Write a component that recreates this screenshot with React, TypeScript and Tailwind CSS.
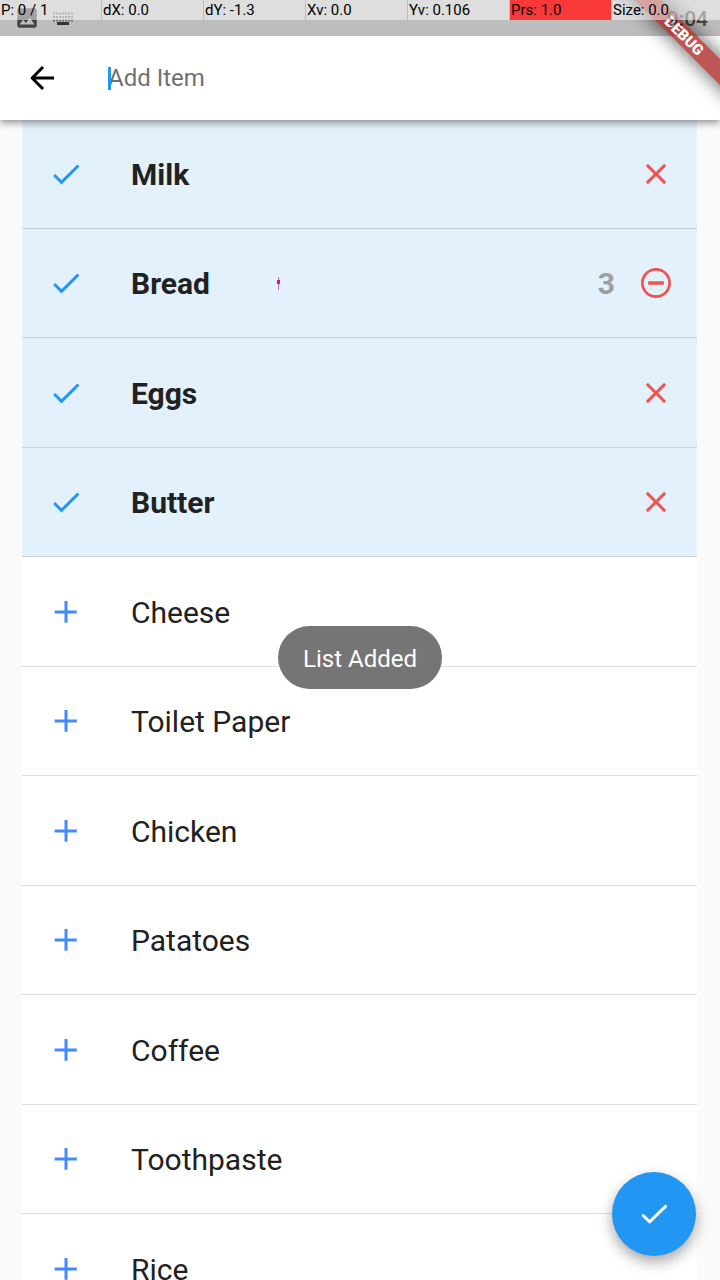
import React from 'react';

type Item = { name: string; added?: boolean; count?: number };

const items: Item[] = [
  { name: 'Milk', added: true },
  { name: 'Bread', added: true, count: 3 },
  { name: 'Eggs', added: true },
  { name: 'Butter', added: true },
  { name: 'Cheese' },
  { name: 'Toilet Paper' },
  { name: 'Chicken' },
  { name: 'Patatoes' },
  { name: 'Coffee' },
  { name: 'Toothpaste' },
  { name: 'Rice' },
];

const pointerStats = ['P: 0 / 1', 'dX: 0.0', 'dY: -1.3', 'Xv: 0.0', 'Yv: 0.106', 'Prs: 1.0', 'Size: 0.0'];

function Icon({ d, className = '' }: { d: string; className?: string }) {
  return (
    <svg viewBox="0 0 24 24" className={`size-9 shrink-0 ${className}`} fill="currentColor" aria-hidden="true">
      <path d={d} />
    </svg>
  );
}

const CHECK = 'M9 16.17 4.83 12l-1.42 1.41L9 19 21 7l-1.41-1.41z';
const ADD = 'M19.2 13H13v6.2h-2V13H4.4v-2H11V4.6h2V11h6.2z';
const CLOSE =
  'M18.800 6.600 17.400 5.200 12 10.600 6.600 5.200 5.200 6.600 10.600 12 5.200 17.400 6.600 18.800 12 13.400 17.400 18.800 18.800 17.400 13.400 12z';
const REMOVE =
  'M6.800 10.800v2.400h10.400v-2.400zM12 2C6.480 2 2 6.480 2 12s4.480 10 10 10 10-4.480 10-10S17.520 2 12 2zm0 18.200c-4.500 0-8.200-3.700-8.200-8.200S7.500 3.800 12 3.800s8.200 3.700 8.200 8.200-3.700 8.200-8.200 8.200z';

function DebugBanner() {
  return (
    <div className="pointer-events-none absolute top-0 right-0 size-[120px] overflow-hidden">
      <div className="absolute top-[27px] -right-[46px] h-[18px] w-[164px] rotate-45 bg-[#a81c1c]/75 text-center text-[15px] leading-[18px] font-black text-white shadow-[0_0_20px_rgba(0,0,0,0.7)]">
        DEBUG
      </div>
    </div>
  );
}

function StatusBar() {
  return (
    <div className="relative z-20 h-9 shrink-0 bg-[#bdbdbd]">
      <DebugBanner />
      <div className="relative flex h-full items-center pl-[14px] pr-3 text-[#424242]">
        <svg viewBox="0 0 24 24" className="size-[26px]" fill="currentColor" aria-hidden="true">
          <path d="M21 19V5c0-1.1-.9-2-2-2H5c-1.1 0-2 .9-2 2v14c0 1.1.9 2 2 2h14c1.1 0 2-.9 2-2zM8.500 13.500l2.500 3.010L14.500 12l4.500 6H5l3.500-4.500z" />
        </svg>
        <svg viewBox="0 0 22 13" className="ml-3 h-[13px] w-[22px]" aria-hidden="true">
          <path d="M1 1.500H21M1 5H21M1 8.500H21" stroke="#6c6c6c" strokeWidth="2" strokeDasharray="2 1" />
          <path d="M5 11.500H17" stroke="#333" strokeWidth="3" />
        </svg>
        <span className="ml-auto pt-0.5 text-[21px] leading-9 font-medium text-black/65">9:04</span>
      </div>
      <div className="absolute inset-x-0 top-0 grid h-5 grid-cols-[repeat(6,102px)_1fr] text-[15px] leading-5 text-black">
        {pointerStats.map((stat) => (
          <span
            key={stat}
            className={`border-r pl-px whitespace-nowrap ${
              stat.startsWith('Prs')
                ? 'border-[#bdbdbd] bg-[#f93838]'
                : stat.startsWith('Size')
                  ? 'border-transparent bg-white/50'
                  : 'border-[#bdbdbd] bg-white/50'
            }`}
          >
            {stat}
          </span>
        ))}
      </div>
    </div>
  );
}

function ItemRow({ item }: { item: Item }) {
  return (
    <li
      className={`relative flex items-center border-b pr-[23px] pl-[26px] odd:h-[110px] even:h-[109px] ${
        item.added ? 'border-[#c4d2dc] bg-[#e3f1fc]' : 'border-[#dedede] bg-white'
      }`}
    >
      <button
        type="button"
        aria-label={item.added ? `${item.name} added` : `Add ${item.name}`}
        className={item.added ? 'text-[#2196f3]' : 'text-[#448aff]'}
      >
        <Icon d={item.added ? CHECK : ADD} />
      </button>
      <span className={`ml-[47px] pt-0.5 text-[30px] leading-9 text-[#212121] ${item.added ? 'font-bold' : ''}`}>
        {item.name}
      </span>
      {item.count && (
        <>
          <svg viewBox="0 0 3 13" className="absolute top-[48px] left-[255px] h-[13px] w-[3px]" aria-hidden="true">
            <path d="M1.500 0V13" stroke="#b86cc0" />
            <path d="M0 5H3" stroke="#f01450" strokeWidth="4" />
          </svg>
          <span className="mr-[23px] ml-auto pt-0.5 text-[30px] leading-9 font-bold text-[#9e9e9e]">
            {item.count}
          </span>
        </>
      )}
      {item.added && (
        <button
          type="button"
          aria-label={`Remove ${item.name}`}
          className={`text-[#ef5350] ${item.count ? '' : 'ml-auto'}`}
        >
          <Icon d={item.count ? REMOVE : CLOSE} />
        </button>
      )}
    </li>
  );
}

export default function App() {
  return (
    <div className="relative flex h-screen flex-col overflow-hidden bg-[#fafafa] font-[Roboto,sans-serif]">
      <StatusBar />
      <header className="relative z-10 flex h-[84px] shrink-0 items-center bg-white pl-6 shadow-[0_3px_7px_rgba(0,0,0,0.4)]">
        <button type="button" aria-label="Back" className="text-black">
          <svg viewBox="0 0 24 24" className="size-9" fill="none" stroke="currentColor" strokeWidth="2" aria-hidden="true">
            <path d="M20 12H5.500M12.700 4.700 5.400 12l7.300 7.300" strokeLinejoin="round" />
          </svg>
        </button>
        <div className="relative ml-12 flex-1">
          <input
            type="text"
            aria-label="Add Item"
            placeholder="Add Item"
            className="block w-full bg-transparent text-[24px] leading-8 text-[#212121] outline-none placeholder:text-[#707070]"
          />
          <span className="absolute top-[5px] left-0 h-[23px] w-[3px] bg-[#2196f3]" />
        </div>
      </header>

      <main className="min-h-0 flex-1 overflow-hidden pr-[23px] pl-[22px]">
        <ul className="-mt-px">
          {items.map((item) => (
            <ItemRow key={item.name} item={item} />
          ))}
        </ul>
      </main>

      <div
        role="status"
        className="absolute top-[626px] left-1/2 z-20 -translate-x-1/2 rounded-full bg-[#757575] px-[25px] pt-[18px] pb-[14px] text-[24px] leading-[31px] whitespace-nowrap text-white"
      >
        List Added
      </div>

      <button
        type="button"
        aria-label="Done"
        className="absolute right-6 bottom-6 z-20 flex size-[84px] items-center justify-center rounded-full bg-[#2196f3] text-white shadow-[0_6px_14px_rgba(0,0,0,0.35)]"
      >
        <svg viewBox="0 0 24 24" className="size-9" fill="none" stroke="currentColor" strokeWidth="2" strokeLinecap="round" strokeLinejoin="round" aria-hidden="true">
          <path d="M4.800 13 9 17.200 19.700 6.900" />
        </svg>
      </button>
    </div>
  );
}
